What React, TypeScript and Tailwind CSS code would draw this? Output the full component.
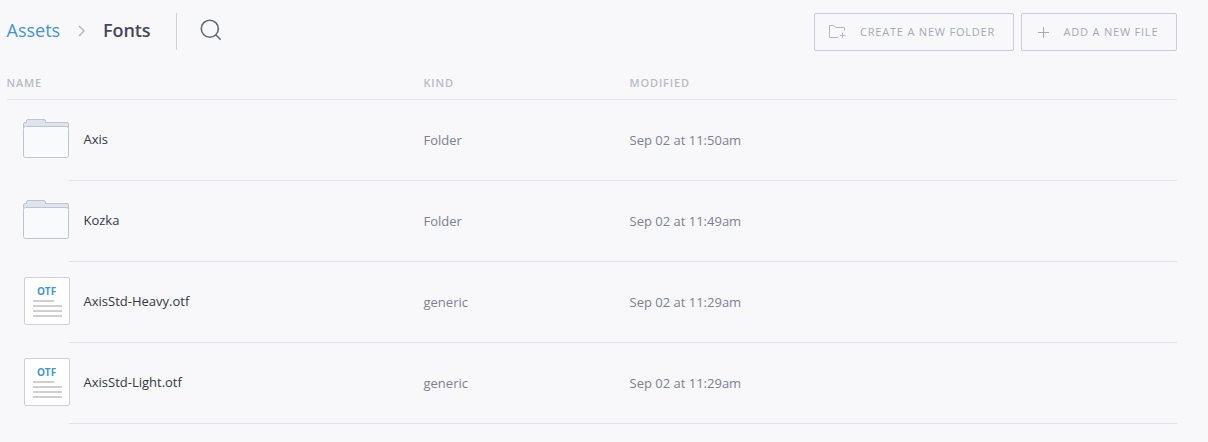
import type { ReactNode } from 'react';

type Asset = {
  name: string;
  kind: string;
  modified: string;
};

const assets: Asset[] = [
  { name: 'Axis', kind: 'Folder', modified: 'Sep 02 at 11:50am' },
  { name: 'Kozka', kind: 'Folder', modified: 'Sep 02 at 11:49am' },
  { name: 'AxisStd-Heavy.otf', kind: 'generic', modified: 'Sep 02 at 11:29am' },
  { name: 'AxisStd-Light.otf', kind: 'generic', modified: 'Sep 02 at 11:29am' },
];

function FolderIcon() {
  return (
    <svg className="ml-4 mt-[19px] block h-[39px] w-[46px]" viewBox="0 0 46 39" fill="none" stroke="#c1c4ce">
      <path
        d="M.5 9V5Q.5 3.5 2 3.5H3.5V2Q3.5 .5 5 .5H21Q22.5 .5 22.5 2V3.5H44Q45.5 3.5 45.5 5V9Z"
        fill="#dfe3ee"
      />
      <rect x=".5" y="7.5" width="45" height="31" rx="2" fill="#f9fafc" />
    </svg>
  );
}

function FileIcon({ ext }: { ext: string }) {
  return (
    <div className="ml-[17px] mt-[15px] h-12 w-[46px] rounded-[2px] border border-[#ced1d9] bg-white pl-2 pt-[6px]">
      <div className="w-[27px] text-center text-[10px] font-bold leading-[14px] text-[#4595cb]">{ext}</div>
      <div className="mt-[2px] grid gap-[3px]">
        <div className="h-[2px] w-[21px] bg-[#cfcfd3]" />
        <div className="h-[2px] w-[29px] bg-[#cfcfd3]" />
        <div className="h-[2px] w-[29px] bg-[#cfcfd3]" />
        <div className="h-[2px] w-[29px] bg-[#cfcfd3]" />
      </div>
    </div>
  );
}

function ActionButton({ className, icon, children }: { className: string; icon: ReactNode; children: ReactNode }) {
  return (
    <button
      className={`flex h-[38px] items-center whitespace-nowrap rounded-[2px] border border-[#c9cbda] text-[11px] tracking-[0.8px] text-[#a4a8ba] ${className}`}
    >
      {icon}
      {children}
    </button>
  );
}

export default function App() {
  return (
    <main className="h-[442px] bg-[#f8f8fb] pl-[7px] pr-[31px] pt-[13px] font-['Open_Sans','Noto_Sans',sans-serif]">
      <header className="flex h-[38px] items-center">
        <a className="-ml-[0.5px] w-[71.5px] pb-[5px] text-[18px] leading-6 text-[#4595cb]">Assets</a>
        <svg className="mt-[-2px] h-3 w-[7px]" viewBox="0 0 7 12" fill="none" stroke="#b1b3bf" strokeWidth="1.4">
          <path d="M1 1 6 6 1 11" />
        </svg>
        <h1 className="ml-[18px] w-[73px] pb-[5px] text-[18px] font-semibold leading-6 tracking-[-0.1px] text-[#46485a]">Fonts</h1>
        <div className="h-[37px] w-px self-start bg-[#cfd0df]" />
        <svg className="ml-[23px] mt-[-4px] h-[22px] w-[22px]" viewBox="0 0 22 22" fill="none" stroke="#62667a" strokeWidth="1.6">
          <circle cx="9.8" cy="9.7" r="8.5" />
          <path d="m15.7 15.7 5 5" />
        </svg>
        <div className="ml-auto flex gap-[7px]">
          <ActionButton
            className="w-[200px] pl-[14px]"
            icon={
              <svg className="mr-[14px] h-[14px] w-[17px]" viewBox="0 0 17 14" fill="none" stroke="#b3b6c6">
                <path d="M9 12.5H.5V.5H5L6.5 2.5H15.5V5.5M13.5 7.5V13M11 10.5H16.5" />
              </svg>
            }
          >
            CREATE A NEW FOLDER
          </ActionButton>
          <ActionButton
            className="w-[156px] pl-4"
            icon={
              <svg className="mr-[14.5px] h-[11px] w-[11px]" viewBox="0 0 11 11" fill="none" stroke="#a4a8ba">
                <path d="M5.5 0V11M0 5.5H11" />
              </svg>
            }
          >
            ADD A NEW FILE
          </ActionButton>
        </div>
      </header>

      <div className="mt-[23px] grid h-[26px] grid-cols-[416.5px_206px_1fr] border-b border-[#e5e6eb] text-[11px] font-semibold leading-[18px] tracking-[0.85px] text-[#b9bbc7]">
        <div className="-ml-[0.5px]">NAME</div>
        <div>KIND</div>
        <div>MODIFIED</div>
      </div>

      {assets.map((asset) => (
        <div key={asset.name} className="flex h-[81px]">
          <div className="w-[62px] shrink-0">
            {asset.kind === 'Folder' ? <FolderIcon /> : <FileIcon ext="OTF" />}
          </div>
          <div className="grid flex-1 grid-cols-[340px_206px_1fr] border-b border-[#e3e4ea] pl-[14.5px] text-[13px] leading-5 text-[#7c8092]">
            <div className="pt-[29px] text-[#343744]">{asset.name}</div>
            <div className="pt-[30px]">{asset.kind}</div>
            <div className="pt-[30px]">{asset.modified}</div>
          </div>
        </div>
      ))}
    </main>
  );
}
